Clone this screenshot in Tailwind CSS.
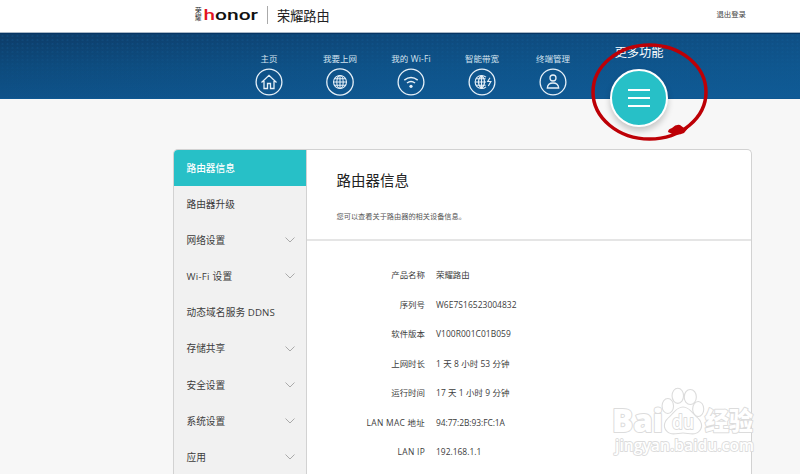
<!DOCTYPE html>
<html lang="zh-CN">
<head>
<meta charset="utf-8">
<title>荣耀路由</title>
<script src="https://cdn.jsdelivr.net/npm/@tailwindcss/browser@4"></script>
</head>
<body class="relative h-[474px] w-[800px] overflow-hidden bg-[#f7f7f7] font-['Open_Sans','Noto_Sans_CJK_SC',sans-serif] text-[#3c3c3c]">
<header class="flex h-[33px] items-start border-b border-[#a9b8c6] bg-white pl-[195px]">
  <svg class="mt-[3px] h-[24px] w-[64px] shrink-0 overflow-visible" viewBox="0 -3 64 24" role="img">
    <g font-family="Noto Sans CJK SC, sans-serif" font-size="6.6" fill="#222"><text x="0" y="7.2">荣</text><text x="0" y="14">耀</text></g>
    <g font-family="Roboto, sans-serif" font-weight="500" font-size="15.5">
      <text x="8.5" y="14" fill="#e3141e" textLength="11.5" lengthAdjust="spacingAndGlyphs">h</text>
      <text x="20" y="14" fill="#111" textLength="43" lengthAdjust="spacingAndGlyphs">onor</text>
    </g>
  </svg>
  <span class="ml-[8px] mt-[6px] h-[18px] w-px bg-[#aaa]"></span>
  <h1 class="ml-[9px] mt-[6px] text-[13.2px] leading-[20px] text-[#222]">荣耀路由</h1>
  <a class="ml-auto mr-[54px] mt-[8px] text-[7.4px] leading-[12px] text-[#444]">退出登录</a>
</header>

<nav class="relative h-[66px] border-y border-t-[#063564] border-b-[#0e5791] bg-linear-to-b from-[#0d3c68] via-[#0d4a7c] via-50% to-[#0f5289]">
  <div class="absolute inset-0 bg-[radial-gradient(ellipse_at_center,#1a6cac38_0,#1a6cac38_1px,transparent_1.3px)] bg-size-[5px_4px] mask-b-from-10% mask-b-to-90%"></div>
  <div class="absolute inset-0 bg-linear-to-r from-transparent via-[#1166a6]/30 to-[#1166a6]/45"></div>
  <div class="relative flex pl-[233.500px] pt-[19px] text-[8.5px] leading-[12px] text-[#d5e4f0]">
    <a class="flex w-[71px] flex-col items-center gap-[3px]">主页
      <svg class="size-[28px]" viewBox="0 0 28 28" fill="none" stroke="#e6f0f8" stroke-width="1.3"><circle cx="14" cy="14" r="12.9"/><path d="M6.500 14.500 14 7.300l7.500 7.200M9 13v7.500h3.500V15.500h3v5H19V13"/></svg></a>
    <a class="flex w-[71px] flex-col items-center gap-[3px]">我要上网
      <svg class="size-[28px]" viewBox="0 0 28 28" fill="none" stroke="#e6f0f8" stroke-width="1.3"><circle cx="14" cy="14" r="13.2"/><g stroke-width="1.1"><circle cx="14" cy="14" r="6.5"/><ellipse cx="14" cy="14" rx="3.2" ry="6.5"/><path d="M14 7.5v13M7.5 14h13M8.6 10.8h10.8M8.6 17.2h10.8"/></g></svg></a>
    <a class="flex w-[71px] flex-col items-center gap-[3px]"><span class="tracking-[0.15px]">我的 Wi-Fi</span>
      <svg class="size-[28px]" viewBox="0 0 28 28" fill="none" stroke="#e6f0f8" stroke-width="1.3"><circle cx="14" cy="14" r="12.9"/><path d="M7.3 12.1q6.7-5.2 13.4 0M10 15q4-3.2 8 0" stroke-width="1.5"/><circle cx="14" cy="18.3" r="1.6" fill="#e6f0f8" stroke="none"/></svg></a>
    <a class="flex w-[71px] flex-col items-center gap-[3px]">智能带宽
      <svg class="size-[28px]" viewBox="0 0 28 28" fill="none" stroke="#e6f0f8" stroke-width="1.3"><circle cx="14" cy="14" r="12.9"/><g stroke-width="1.1"><path d="M18 9.2a6.5 6.5 0 1 0 0 9.6"/><path d="M13.5 7.5v13M7 14h11M8.2 10.8h9.4M8.2 17.2h9.4M13.5 7.5c-4 3.4-4 9.6 0 13M13.5 7.5c4 3.4 4 9.6 0 13M22 9.7 19.7 13.5h3.2L20.3 18"/></g></svg></a>
    <a class="flex w-[71px] flex-col items-center gap-[3px]">终端管理
      <svg class="size-[28px]" viewBox="0 0 28 28" fill="none" stroke="#e6f0f8" stroke-width="1.3"><circle cx="14" cy="14" r="12.9"/><circle cx="14" cy="10" r="3"/><path d="M8.3 20c.3-3.8 2.2-5 5.7-5s5.4 1.2 5.7 5Z"/></svg></a>
    <a class="relative -mt-[9px] ml-[21.500px] flex w-[58px] flex-col items-center text-[12.2px] leading-[18px] text-white">更多功能
      <span class="absolute top-[25px] flex size-[58px] flex-col items-center justify-center gap-[6px] rounded-full border-2 border-white bg-[#27c0c7] shadow-[0_4px_6px_#0003]">
        <i class="h-[2px] w-[22px] bg-white"></i><i class="h-[2px] w-[22px] bg-white"></i><i class="h-[2px] w-[22px] bg-white"></i>
      </span></a>
  </div>
</nav>

<main class="ml-[173px] mt-[50px] flex h-[341px] w-[579px] overflow-hidden rounded-t-[5px] border border-b-0 border-[#d2d2d2] bg-white">
  <aside class="w-[133px] shrink-0 border-r border-[#d2d2d2] bg-[#f1f1f1] text-[9.7px]">
    <div class="flex h-[36px] items-center bg-[#27c0c7] pl-[12.500px] pt-[2px] font-medium text-white">路由器信息</div>
    <div class="flex h-[36.15px] items-center pl-[12.500px] pt-[2px]">路由器升级</div>
    <div class="flex h-[36.15px] items-center justify-between pl-[12.500px] pr-[11px]"><span class="pt-[2px]">网络设置</span><svg class="h-[6px] w-[10px]" viewBox="0 0 10 6" fill="none" stroke="#aaa"><path d="M.5.5 5 5 9.500.5"/></svg></div>
    <div class="flex h-[36.15px] items-center justify-between pl-[12.500px] pr-[11px]"><span class="pt-px tracking-[0.25px]">Wi-Fi 设置</span><svg class="h-[6px] w-[10px]" viewBox="0 0 10 6" fill="none" stroke="#aaa"><path d="M.5.5 5 5 9.500.5"/></svg></div>
    <div class="flex h-[36.15px] items-center pl-[12.500px] pt-px tracking-[0.1px]">动态域名服务 DDNS</div>
    <div class="flex h-[36.15px] items-center justify-between pl-[12.500px] pr-[11px]"><span class="pt-[2px]">存储共享</span><svg class="h-[6px] w-[10px]" viewBox="0 0 10 6" fill="none" stroke="#aaa"><path d="M.5.5 5 5 9.500.5"/></svg></div>
    <div class="flex h-[36.15px] items-center justify-between pl-[12.500px] pr-[11px]"><span class="pt-[2px]">安全设置</span><svg class="h-[6px] w-[10px]" viewBox="0 0 10 6" fill="none" stroke="#aaa"><path d="M.5.5 5 5 9.500.5"/></svg></div>
    <div class="flex h-[36.15px] items-center justify-between pl-[12.500px] pr-[11px]"><span class="pt-[2px]">系统设置</span><svg class="h-[6px] w-[10px]" viewBox="0 0 10 6" fill="none" stroke="#aaa"><path d="M.5.5 5 5 9.500.5"/></svg></div>
    <div class="flex h-[36.15px] items-center justify-between pl-[12.500px] pr-[11px]"><span class="pt-[2px]">应用</span><svg class="h-[6px] w-[10px]" viewBox="0 0 10 6" fill="none" stroke="#aaa"><path d="M.5.5 5 5 9.500.5"/></svg></div>
  </aside>
  <section class="flex-1">
    <div class="h-[91px] border-b-2 border-[#e5e5e5] pl-[29.500px] pt-[20px]">
      <h2 class="text-[14.5px] leading-[22px] text-[#222]">路由器信息</h2>
      <p class="mt-[18px] text-[7.2px] leading-[12px] text-[#555]">您可以查看关于路由器的相关设备信息。</p>
    </div>
    <dl class="grid auto-rows-[29.5px] grid-cols-[118px_1fr] items-center gap-x-[11px] pt-[20px] text-[8.45px]">
      <dt class="text-right">产品名称</dt><dd>荣耀路由</dd>
      <dt class="text-right">序列号</dt><dd class="tracking-[0.05px]">W6E7S16523004832</dd>
      <dt class="text-right">软件版本</dt><dd class="tracking-[0.05px]">V100R001C01B059</dd>
      <dt class="text-right">上网时长</dt><dd class="tracking-[0.08px]">1 天 8 小时 53 分钟</dd>
      <dt class="text-right">运行时间</dt><dd class="tracking-[0.08px]">17 天 1 小时 9 分钟</dd>
      <dt class="text-right tracking-[0.28px]">LAN MAC 地址</dt><dd class="tracking-[-0.08px]">94:77:2B:93:FC:1A</dd>
      <dt class="text-right tracking-[0.28px]">LAN IP</dt><dd>192.168.1.1</dd>
    </dl>
  </section>
</main>

<!-- Hand-drawn marker round the menu button -->
<svg class="absolute left-[580px] top-[35px] h-[115px] w-[140px]" viewBox="0 0 140 115" fill="none">
  <ellipse cx="69.500" cy="57" rx="56.500" ry="47" stroke="#bd0006" stroke-width="3.5"/>
  <path d="M88 97q0-3 4-4 4-4 8-3l4 3 5-1-5 6q-8 4-16-1Z" fill="#bd0006"/>
</svg>

<!-- Watermark -->
<svg class="absolute left-[605px] top-[380px] h-[85px] w-[160px]" viewBox="0 0 160 85" fill="#fff" stroke="#dcdcdc" stroke-width="2" stroke-linejoin="round" paint-order="stroke">
  <g font-family="Open Sans, Noto Sans CJK SC, sans-serif" font-weight="800">
    <text x="7" y="52" font-size="31" textLength="51" lengthAdjust="spacingAndGlyphs">Bai</text>
    <text x="100" y="50" font-size="25" font-weight="900" font-family="Noto Sans CJK SC, sans-serif" textLength="48" lengthAdjust="spacingAndGlyphs">经验</text>
  </g>
  <g stroke-width="2.2">
    <ellipse cx="62.800" cy="26" rx="5.200" ry="7"/><ellipse cx="72.800" cy="15.800" rx="5.200" ry="7"/><ellipse cx="85.300" cy="17" rx="5.500" ry="7"/><ellipse cx="93.200" cy="29" rx="5" ry="7"/>
    <path d="M78 27.500c6 0 9 6 13 9.500 5 4 6.500 9 3.500 13-4 5.500-10.500 2.500-16.500 2.500s-12.500 3-16.500-2.500c-3-4-1.500-9 3.500-13 4-3.500 7-9.500 13-9.500Z"/>
  </g>
  <text x="67" y="49" font-family="Open Sans, sans-serif" font-weight="600" font-size="19" stroke-width="1.800" textLength="22" lengthAdjust="spacingAndGlyphs">du</text>
  <text x="10" y="71" font-family="Open Sans, sans-serif" font-weight="600" font-size="16" stroke-width="1.800" textLength="139" lengthAdjust="spacingAndGlyphs">jingyan.baidu.com</text>
</svg>
</body>
</html>
